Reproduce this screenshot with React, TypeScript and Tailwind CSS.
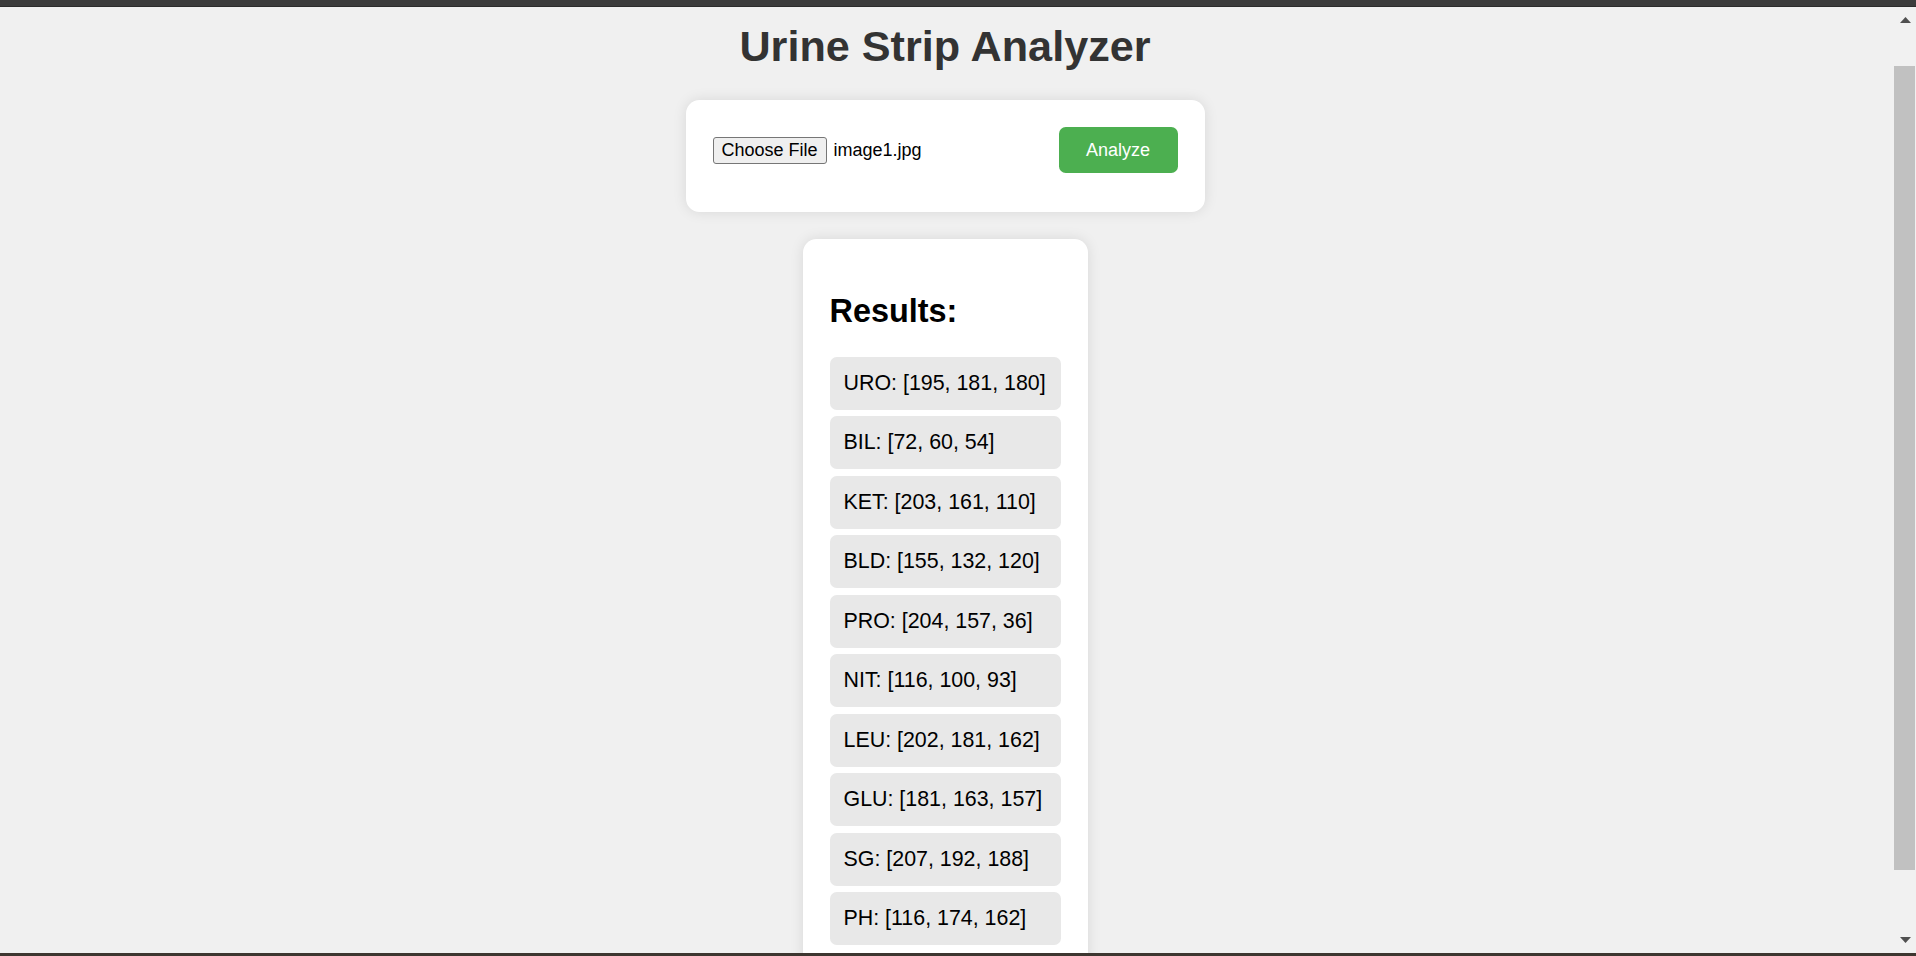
import React from "react";

type Reading = {
  name: string;
  rgb: [number, number, number];
};

const results: Reading[] = [
  { name: "URO", rgb: [195, 181, 180] },
  { name: "BIL", rgb: [72, 60, 54] },
  { name: "KET", rgb: [203, 161, 110] },
  { name: "BLD", rgb: [155, 132, 120] },
  { name: "PRO", rgb: [204, 157, 36] },
  { name: "NIT", rgb: [116, 100, 93] },
  { name: "LEU", rgb: [202, 181, 162] },
  { name: "GLU", rgb: [181, 163, 157] },
  { name: "SG", rgb: [207, 192, 188] },
  { name: "PH", rgb: [116, 174, 162] },
];

function Scrollbar() {
  return (
    <div className="w-[26px] shrink-0 bg-[#f1f1f1] flex flex-col items-stretch">
      {/* up arrow */}
      <div className="h-[59px] flex justify-center pt-[10px] pl-[4px]">
        <svg width="11" height="6" viewBox="0 0 11 6">
          <path d="M5.5 0 L11 6 L0 6 Z" fill="#505050" />
        </svg>
      </div>
      {/* thumb */}
      <div className="h-[804px] ml-[4px] mr-[1px] bg-[#c1c1c1]" />
      <div className="flex-1 flex justify-center items-end pb-[10px] pl-[4px]">
        <svg width="11" height="6" viewBox="0 0 11 6">
          <path d="M0 0 L11 0 L5.5 6 Z" fill="#505050" />
        </svg>
      </div>
    </div>
  );
}

export default function App() {
  return (
    <div
      className="h-[956px] w-full flex flex-col overflow-hidden bg-[#f0f0f0]"
      style={{ fontFamily: '"Liberation Sans", Arial, sans-serif' }}
    >
      {/* window top bar */}
      <div className="h-[7px] shrink-0 bg-[#3c3c3c] border-b border-[#2c2c2c]" />

      <div className="flex-1 flex min-h-0">
        <main className="flex-1 min-w-0 overflow-hidden flex flex-col items-center">
          <h1 className="mt-[14px] text-[43.2px] leading-[50px] font-bold text-[#333333]">
            Urine Strip Analyzer
          </h1>

          {/* upload form */}
          <div className="mt-[29px] w-[519px] bg-white rounded-[13.5px] shadow-[0_0_13.5px_rgba(0,0,0,0.1)] pt-[27px] pb-[39px] px-[27px]">
            <div className="flex items-center justify-between h-[46px]">
              <div className="flex items-center gap-[7px] text-[18px] text-black">
                <button className="h-[27px] px-[8px] bg-[#efefef] border border-[#767676] rounded-[3px] text-[18px] leading-none text-black">
                  Choose File
                </button>
                <span>image1.jpg</span>
              </div>
              <button className="w-[119px] h-[46px] bg-[#4caf50] text-white text-[18px] rounded-[6.75px]">
                Analyze
              </button>
            </div>
          </div>

          {/* results */}
          <div className="mt-[27px] w-[285px] bg-white rounded-[13.5px] shadow-[0_0_13.5px_rgba(0,0,0,0.1)] px-[27px] pt-[53.6px] pb-[27px] shrink-0">
            <h2 className="text-[32.4px] leading-[37px] font-bold text-black">
              Results:
            </h2>
            <ul className="mt-[27.4px] flex flex-col gap-[6.5px]">
              {results.map((r) => (
                <li
                  key={r.name}
                  className="h-[53px] flex items-center pl-[14px] pr-[4px] bg-[#e8e8e8] rounded-[6.75px] text-[21.4px] leading-[25px] text-black whitespace-nowrap"
                >
                  {r.name}: [{r.rgb.join(", ")}]
                </li>
              ))}
            </ul>
          </div>
        </main>
        <Scrollbar />
      </div>

      {/* window bottom edge */}
      <div className="h-[3px] shrink-0 bg-[#3d3630]" />
    </div>
  );
}
